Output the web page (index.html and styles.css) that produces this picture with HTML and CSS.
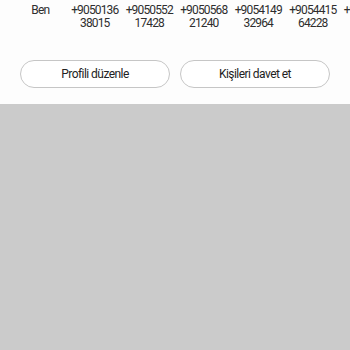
FILE: index.html
```html
<!DOCTYPE html>
<html lang="tr">
<head>
  <meta charset="UTF-8">
  <meta name="viewport" content="width=device-width, initial-scale=1.0">
  <title>Profil</title>
  <link rel="stylesheet" href="styles.css">
</head>
<body>

<div class="panel">
  <!-- Contact strip -->
  <div class="contacts">
    <div class="contact">Ben</div>
    <div class="contact">+9050136<br>38015</div>
    <div class="contact">+9050552<br>17428</div>
    <div class="contact">+9050568<br>21240</div>
    <div class="contact">+9054149<br>32964</div>
    <div class="contact">+9054415<br>64228</div>
    <div class="contact">+9055120<br>81733</div>
  </div>

  <!-- Actions -->
  <div class="actions">
    <button type="button" class="pill">Profili düzenle</button>
    <button type="button" class="pill">Kişileri davet et</button>
  </div>
</div>

<div class="backdrop"></div>

</body>
</html>
```

FILE: styles.css
```css
/* General Styles */
body {
  font-family: Roboto, "Open Sans", sans-serif;
  margin: 0;
  padding: 0;
  background-color: #cbcbcb;
  overflow: hidden;
}
.panel {
  background: #fdfdfd;
  height: 104px;
  overflow: hidden;
}
.contacts {
  display: flex;
  padding: 4px 0 0 13px;
  white-space: nowrap;
}
.contact {
  flex: 0 0 54.5px;
  text-align: center;
  font-size: 12px;
  letter-spacing: -0.85px;
  line-height: 12.5px;
  color: #2e2e2e;
}
.actions {
  display: flex;
  gap: 10px;
  padding: 0 20px;
  margin-top: 31px;
}
.pill {
  flex: 1;
  height: 28px;
  background: #fff;
  border: 1px solid #c6c6c6;
  border-radius: 14px;
  font-family: inherit;
  font-size: 12px;
  letter-spacing: -0.55px;
  color: #222;
  padding: 0;
}
.backdrop {
  height: 246px;
}
```
